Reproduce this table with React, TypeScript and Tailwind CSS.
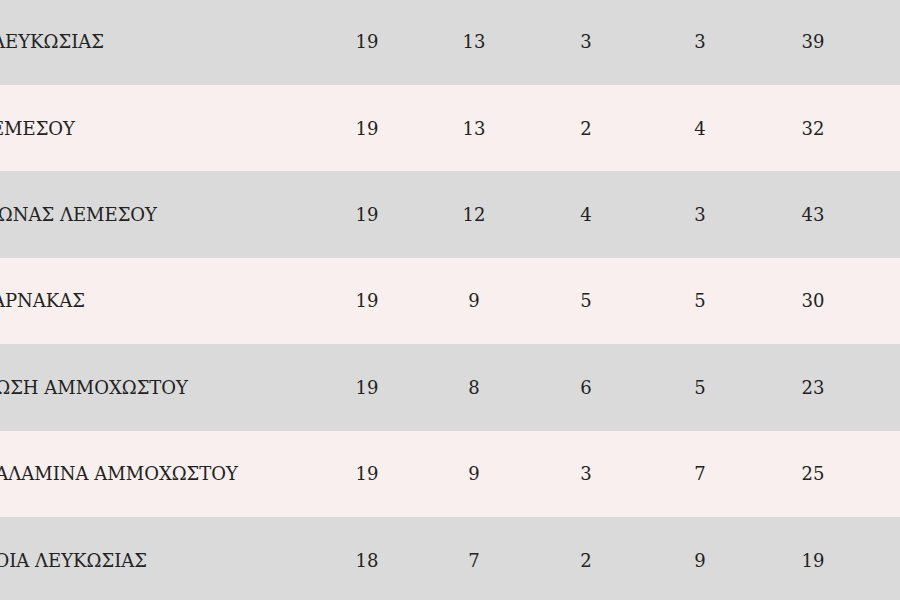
import React from "react";

type Row = { name: string; end: number; p: number; w: number; d: number; l: number; g: number };

const rows: Row[] = [
  { name: "ΑΠΟΕΛ ΛΕΥΚΩΣΙΑΣ", end: 104, p: 19, w: 13, d: 3, l: 3, g: 39 },
  { name: "ΑΕΛ ΛΕΜΕΣΟΥ", end: 75, p: 19, w: 13, d: 2, l: 4, g: 32 },
  { name: "ΑΠΟΛΛΩΝΑΣ ΛΕΜΕΣΟΥ", end: 157, p: 19, w: 12, d: 4, l: 3, g: 43 },
  { name: "ΑΕΚ ΛΑΡΝΑΚΑΣ", end: 85, p: 19, w: 9, d: 5, l: 5, g: 30 },
  { name: "ΑΝΟΡΘΩΣΗ ΑΜΜΟΧΩΣΤΟΥ", end: 188, p: 19, w: 8, d: 6, l: 5, g: 23 },
  { name: "ΝΕΑ ΣΑΛΑΜΙΝΑ ΑΜΜΟΧΩΣΤΟΥ", end: 238, p: 19, w: 9, d: 3, l: 7, g: 25 },
  { name: "ΟΜΟΝΟΙΑ ΛΕΥΚΩΣΙΑΣ", end: 147, p: 18, w: 7, d: 2, l: 9, g: 19 },
];

export default function App() {
  return (
    <div
      className="w-[900px] h-[600px] overflow-hidden bg-white text-[18px] text-[#222222]"
      style={{ fontFamily: '"DejaVu Serif", "Liberation Serif", serif' }}
    >
      <div className="flex flex-col -mt-[1.4px]">
        {rows.map((r, i) => (
          <div
            key={i}
            className={`flex items-center h-[86.4px] shrink-0 ${i % 2 === 0 ? "bg-[#dadada]" : "bg-[#f8efee]"}`}
          >
            <div className="w-[310px] shrink-0 flex">
              <div className="flex justify-end" style={{ width: r.end }}>
                <span className="whitespace-nowrap shrink-0">{r.name}</span>
              </div>
            </div>
            <div className="w-[114px] shrink-0 text-center">{r.p}</div>
            <div className="w-[100px] shrink-0 text-center">{r.w}</div>
            <div className="w-[124px] shrink-0 text-center">{r.d}</div>
            <div className="w-[104px] shrink-0 text-center">{r.l}</div>
            <div className="w-[122px] shrink-0 text-center">{r.g}</div>
          </div>
        ))}
      </div>
    </div>
  );
}
